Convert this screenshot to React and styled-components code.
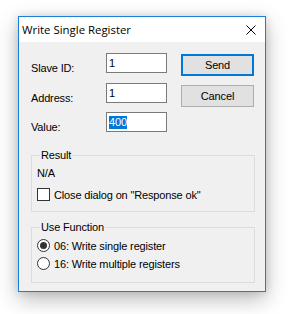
import React, { useState } from "react";
import styled, { createGlobalStyle } from "styled-components";

const GlobalStyle = createGlobalStyle`
  body {
    margin: 0;
    background: #ffffff;
    font-family: "Liberation Sans", Arial, sans-serif;
  }
`;

const Page = styled.div`
  width: 290px;
  height: 314px;
  padding: 16px 0 0 18px;
  box-sizing: border-box;
`;

const Window = styled.div`
  width: 248px;
  height: 276px;
  box-sizing: border-box;
  border: 1px solid #1a7fd6;
  background: #f0f0f0;
  box-shadow: 0 7px 20px rgba(0, 0, 0, 0.28), 0 0 8px rgba(0, 0, 0, 0.12);
  display: flex;
  flex-direction: column;
`;

const TitleBar = styled.div`
  height: 25px;
  background: #ffffff;
  display: flex;
  align-items: center;
  padding-left: 3px;
`;

const Title = styled.div`
  flex: 1;
  font-family: "Open Sans", "Noto Sans", sans-serif;
  font-size: 11.4px;
  color: #000;
`;

const CloseBtn = styled.div`
  width: 29px;
  height: 25px;
  display: flex;
  align-items: center;
  justify-content: center;
`;

const Body = styled.div`
  flex: 1;
  padding: 11px 11px 0 12px;
  font-size: 11px;
  letter-spacing: -0.15px;
  color: #000;
`;

const Top = styled.div`
  display: flex;
  align-items: flex-start;
`;

const Fields = styled.div`
  display: grid;
  grid-template-columns: 75px 61px;
  grid-auto-rows: 20px;
  row-gap: 9.5px;
`;

const Label = styled.div`
  align-self: end;
  line-height: 13px;
  margin-bottom: -2px;
`;

const Input = styled.div`
  box-sizing: border-box;
  height: 20px;
  border: 1px solid #7a7a7a;
  background: #fff;
  padding: 0 0 0 2px;
  line-height: 18px;
  font-size: 11px;
`;

const Selected = styled.span`
  display: inline-block;
  background: #0078d7;
  color: #fff;
  line-height: 13px;
  vertical-align: middle;
  margin-top: -1px;
`;

const Buttons = styled.div`
  margin-left: 14px;
  margin-top: 1px;
  display: flex;
  flex-direction: column;
  gap: 9px;
`;

const Button = styled.div`
  box-sizing: border-box;
  width: 73px;
  height: 22px;
  background: #e1e1e1;
  border: ${(p) => (p.$default ? "2px solid #0078d7" : "1px solid #adadad")};
  display: flex;
  align-items: center;
  justify-content: center;
  font-size: 11px;
`;

const Group = styled.fieldset`
  margin: ${(p) => p.$top}px 0 0;
  padding: 0 0 ${(p) => p.$pb}px 5px;
  border: 1px solid #dcdcdc;
  width: 224px;
  box-sizing: border-box;
`;

const Legend = styled.legend`
  margin-left: 3px;
  padding: 0 1px;
  line-height: 13px;
`;

const Text = styled.div`
  line-height: 13px;
  margin-top: ${(p) => p.$mt || 0}px;
`;

const Option = styled.div`
  display: flex;
  align-items: center;
  gap: 4px;
  height: 13px;
  margin-top: ${(p) => p.$mt || 0}px;
`;

const Check = styled.div`
  width: 13px;
  height: 13px;
  box-sizing: border-box;
  border: 1px solid #333;
  background: #fff;
`;

const Radio = styled.div`
  width: 13px;
  height: 13px;
  box-sizing: border-box;
  border-radius: 50%;
  border: 1px solid #333;
  background: #fff;
  display: flex;
  align-items: center;
  justify-content: center;
  &::after {
    content: "";
    width: 7px;
    height: 7px;
    border-radius: 50%;
    background: ${(p) => (p.$on ? "#333" : "transparent")};
  }
`;

export default function App() {
  const [fn, setFn] = useState(6);
  return (
    <Page>
      <GlobalStyle />
      <Window>
        <TitleBar>
          <Title>Write Single Register</Title>
          <CloseBtn>
            <svg width="10" height="10" viewBox="0 0 10 10">
              <path d="M0.5 0.5 L9.5 9.5 M9.5 0.5 L0.5 9.5" stroke="#000" strokeWidth="1" />
            </svg>
          </CloseBtn>
        </TitleBar>
        <Body>
          <Top>
            <Fields>
              <Label>Slave ID:</Label>
              <Input>1</Input>
              <Label>Address:</Label>
              <Input>1</Input>
              <Label>Value:</Label>
              <Input>
                <Selected>400</Selected>
              </Input>
            </Fields>
            <Buttons>
              <Button $default>Send</Button>
              <Button>Cancel</Button>
            </Buttons>
          </Top>
          <Group $top={17} $pb={10}>
            <Legend>Result</Legend>
            <Text $mt={5}>N/A</Text>
            <Option $mt={8}>
              <Check />
              Close dialog on "Response ok"
            </Option>
          </Group>
          <Group $top={9} $pb={12}>
            <Legend>Use Function</Legend>
            <Option $mt={5} onClick={() => setFn(6)}>
              <Radio $on={fn === 6} />
              06: Write single register
            </Option>
            <Option $mt={5} onClick={() => setFn(16)}>
              <Radio $on={fn === 16} />
              16: Write multiple registers
            </Option>
          </Group>
        </Body>
      </Window>
    </Page>
  );
}
